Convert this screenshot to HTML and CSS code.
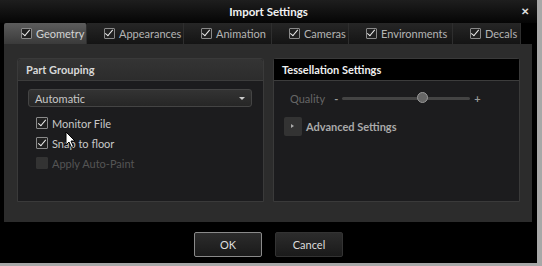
FILE: index.html
```html
<!DOCTYPE html>
<html lang="en">
<head>
  <meta charset="UTF-8" />
  <title>Import Settings</title>
  <link rel="stylesheet" href="styles.css">
</head>
<body>
  <div class="dialog">
    <div class="titlebar">
      <span class="title">Import Settings</span>
      <span class="close">&#x2715;</span>
    </div>

    <div class="tabs">
      <div class="tab tab-geometry active"><span class="check on"></span>Geometry</div>
      <div class="tab tab-appearances"><span class="check on"></span>Appearances</div>
      <div class="tab tab-animation"><span class="check on"></span>Animation</div>
      <div class="tab tab-cameras"><span class="check on"></span>Cameras</div>
      <div class="tab tab-environments"><span class="check on"></span>Environments</div>
      <div class="tab tab-decals"><span class="check on"></span>Decals</div>
    </div>

    <div class="panel">
      <div class="group">
        <div class="group-head">Part Grouping</div>
        <div class="group-body">
          <div class="select">
            <span>Automatic</span>
            <span class="caret"></span>
          </div>
          <label class="option"><span class="check on"></span>Monitor File</label>
          <label class="option"><span class="check on"></span>Snap to floor</label>
          <label class="option disabled"><span class="check"></span>Apply Auto-Paint</label>
        </div>
      </div>

      <div class="group dark">
        <div class="group-head">Tessellation Settings</div>
        <div class="group-body">
          <div class="quality">
            <span class="label">Quality</span>
            <span class="sign">-</span>
            <div class="track"><span class="knob"></span></div>
            <span class="sign">+</span>
          </div>
          <div class="advanced">
            <span class="arrow"></span>
            <span>Advanced Settings</span>
          </div>
        </div>
      </div>
    </div>

    <div class="buttons">
      <button class="btn focus">OK</button>
      <button class="btn">Cancel</button>
    </div>

    <svg class="cursor" width="12" height="18" viewBox="0 0 12 18">
      <path d="M1 1 L1 14 L4 11 L6.5 16.5 L8.5 15.5 L6 10 L10 10 Z" fill="#fff" stroke="#000" stroke-width="1"/>
    </svg>
  </div>
</body>
</html>
```

FILE: styles.css
```css
body {
  margin: 0;
  background: #a8a8a8;
  font-family: Lato, "Noto Sans", sans-serif;
  font-size: 11px;
  color: #ccc;
}

.dialog {
  position: relative;
  width: 537px;
  height: 263px;
  background: #000;
  display: flex;
  flex-direction: column;
}

.titlebar {
  height: 23px;
  display: flex;
  align-items: center;
  justify-content: center;
  background: linear-gradient(#1e1e1e, #050505);
  position: relative;
}

.title {
  color: #f2f2f2;
  font-weight: bold;
  font-size: 11.5px;
}

.close {
  position: absolute;
  right: 8px;
  top: 5px;
  color: #ddd;
  font-size: 10px;
  font-weight: bold;
}

/* tab strip */
.tabs {
  height: 21px;
  display: flex;
  padding-left: 4px;
}

.tab {
  display: flex;
  align-items: center;
  gap: 4px;
  padding-left: 17px;
  box-sizing: border-box;
  background: linear-gradient(#262626, #141414);
  border-right: 1px solid #2e2e2e;
  color: #b4b4b4;
  font-size: 11px;
  white-space: nowrap;
}

.tab-geometry { width: 83px; }
.tab-appearances { width: 97px; }
.tab-animation { width: 88px; }
.tab-cameras { width: 77px; }
.tab-environments { width: 104px; }
.tab-decals { width: 68px; }

.tab.active {
  background: linear-gradient(#5c5c5c, #3a3a3a);
  color: #d4d4d4;
  border-radius: 2px 2px 0 0;
}

.check {
  position: relative;
  width: 9px;
  height: 9px;
  border: 1px solid #8a8a8a;
  border-radius: 1px;
  background: #202020;
  flex: none;
}

.check.on::after {
  content: "";
  position: absolute;
  left: 2px;
  top: -1px;
  width: 3px;
  height: 7px;
  border: solid #eee;
  border-width: 0 1.5px 1.5px 0;
  transform: rotate(40deg);
}

/* main panel */
.panel {
  margin: 0 5px 0 4px;
  height: 178px;
  background: #2c2c2c;
  display: flex;
  gap: 9px;
  padding: 14px 12px 0 13px;
  box-sizing: border-box;
}

.group {
  flex: 1;
  height: 142px;
  display: flex;
  flex-direction: column;
  border: 1px solid #3a3a3a;
  border-radius: 3px 3px 0 0;
  background: #1c1c1e;
}

.group-head {
  height: 21px;
  display: flex;
  align-items: center;
  padding-left: 8px;
  background: linear-gradient(#343434, #2c2c2c);
  border-bottom: 1px solid #3c3c3c;
  border-radius: 3px 3px 0 0;
  color: #d8d8d8;
  font-weight: bold;
  font-size: 11px;
}

.group.dark .group-head {
  background: #000;
  color: #f0f0f0;
  border-radius: 0;
}

.group-body {
  padding: 8px 11px 0 10px;
}

.select {
  height: 18px;
  display: flex;
  align-items: center;
  justify-content: space-between;
  padding: 0 6px;
  box-sizing: border-box;
  background: linear-gradient(#333, #262626);
  border: 1px solid #444;
  border-radius: 3px;
  color: #c8c8c8;
  margin-bottom: 6px;
}

.caret {
  width: 0;
  height: 0;
  border-left: 3px solid transparent;
  border-right: 3px solid transparent;
  border-top: 3px solid #ccc;
}

.option {
  display: flex;
  align-items: center;
  gap: 4px;
  height: 20px;
  padding-left: 8px;
  color: #c8c8c8;
}

.option .check {
  width: 10px;
  height: 10px;
}

.option .check.on::after {
  left: 3px;
  top: 0;
}

.option.disabled {
  color: #555;
}

.option.disabled .check {
  border-color: #333;
  background: #333;
}

/* tessellation */
.quality {
  display: flex;
  align-items: center;
  gap: 4px;
  height: 18px;
  padding: 0 0 0 6px;
  color: #666;
}

.quality .label {
  margin-right: 5px;
}

.quality .sign {
  color: #999;
  font-weight: bold;
}

.track {
  position: relative;
  width: 128px;
  height: 3px;
  background: #444;
  border-radius: 2px;
}

.knob {
  position: absolute;
  left: 75px;
  top: -5px;
  width: 11px;
  height: 11px;
  box-sizing: border-box;
  border-radius: 50%;
  background: #666;
  border: 1px solid #999;
}

.advanced {
  display: flex;
  align-items: center;
  gap: 4px;
  margin-top: 10px;
  color: #aaa;
  font-weight: bold;
}

.advanced .arrow {
  position: relative;
  width: 18px;
  height: 19px;
  background: #333;
  border-radius: 2px;
}

.advanced .arrow::after {
  content: "";
  position: absolute;
  left: 7px;
  top: 7px;
  border-top: 2.5px solid transparent;
  border-bottom: 2.5px solid transparent;
  border-left: 3px solid #aaa;
}

/* buttons */
.buttons {
  flex: 1;
  display: flex;
  justify-content: center;
  align-items: flex-start;
  gap: 13px;
  padding-top: 10px;
}

.btn {
  width: 68px;
  height: 25px;
  background: linear-gradient(#2c2c2c, #1a1a1a);
  border: 1px solid #333;
  border-radius: 2px;
  color: #ddd;
  font-family: inherit;
  font-size: 11px;
}

.btn.focus {
  border-color: #8a8a8a;
}

.cursor {
  position: absolute;
  left: 65px;
  top: 131px;
}
```
